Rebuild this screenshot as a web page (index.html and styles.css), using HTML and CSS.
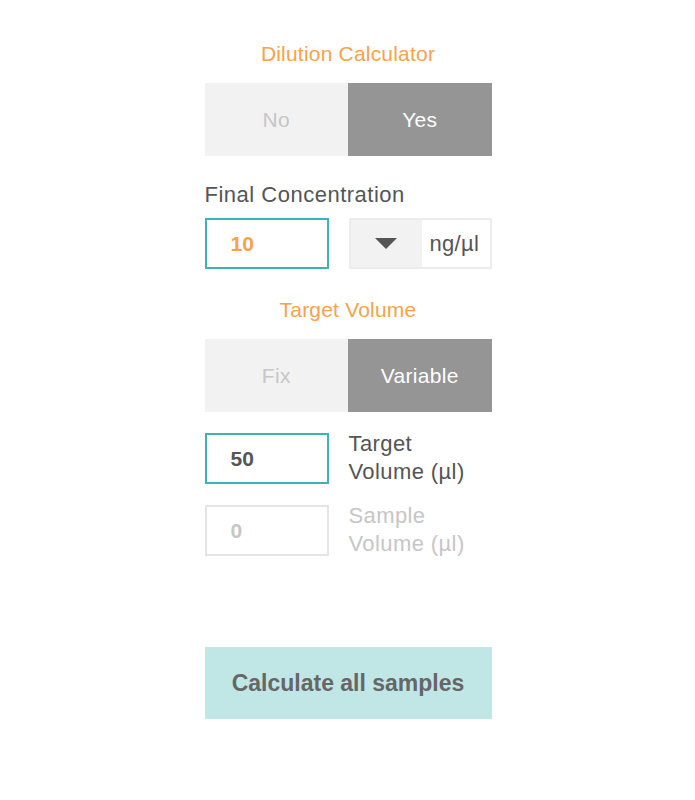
FILE: index.html
```html
<!DOCTYPE html>
<html>
<head>
<meta charset="UTF-8">
<title>Dilution Calculator</title>
<link rel="stylesheet" href="styles.css">
</head>
<body>
<div class="panel">
  <div class="section_title">Dilution Calculator</div>
  <div class="toggle">
    <div class="toggle_opt">No</div>
    <div class="toggle_opt active">Yes</div>
  </div>

  <div class="field_label">Final Concentration</div>
  <div class="row">
    <div class="num_input focus orange">10</div>
    <div class="unit_select">
      <div class="unit_arrow">
        <svg width="22" height="11" viewBox="0 0 22 11"><path d="M0 0 L22 0 L11 11 Z" fill="#555"/></svg>
      </div>
      <div class="unit_text">ng/µl</div>
    </div>
  </div>

  <div class="section_title second">Target Volume</div>
  <div class="toggle">
    <div class="toggle_opt">Fix</div>
    <div class="toggle_opt active">Variable</div>
  </div>

  <div class="row vol_row">
    <div class="num_input focus">50</div>
    <div class="row_label">Target<br>Volume (µl)</div>
  </div>
  <div class="row vol_row disabled">
    <div class="num_input">0</div>
    <div class="row_label">Sample<br>Volume (µl)</div>
  </div>

  <div class="calc_button">Calculate all samples</div>
</div>
</body>
</html>
```

FILE: styles.css
```css
html, body {
  margin: 0;
  background: #ffffff;
}

body {
  font-family: "Liberation Sans", Arial, sans-serif;
}

.panel {
  width: 287px;
  margin: 0 auto;
  padding-top: 42px;
  padding-left: 1px;
}

.section_title {
  text-align: center;
  color: #f7a24c;
  font-size: 21px;
  line-height: 24px;
  letter-spacing: 0.2px;
  margin-bottom: 17px;
}

.section_title.second {
  margin-top: 29px;
}

.toggle {
  display: flex;
  height: 73px;
}

.toggle_opt {
  flex: 1;
  display: flex;
  align-items: center;
  justify-content: center;
  background: #f2f2f2;
  color: #c6c6c6;
  font-size: 21px;
  letter-spacing: 0.3px;
}

.toggle_opt.active {
  background: #959595;
  color: #ffffff;
}

.field_label {
  margin-top: 27px;
  margin-bottom: 11px;
  color: #555555;
  font-size: 22px;
  line-height: 24px;
  letter-spacing: 0.5px;
}

.row {
  display: flex;
  gap: 20px;
  height: 51px;
}

.num_input {
  box-sizing: border-box;
  width: 124px;
  height: 51px;
  border: 2px solid #e4e4e4;
  padding-left: 24px;
  display: flex;
  align-items: center;
  font-size: 21px;
  font-weight: bold;
  color: #c6c6c6;
}

.num_input.focus {
  border-color: #3eb2b5;
  color: #555555;
}

.num_input.orange {
  color: #f7a24c;
}

.unit_select {
  box-sizing: border-box;
  flex: 1;
  display: flex;
  border: 2px solid #ececec;
}

.unit_arrow {
  width: 71px;
  background: #f2f2f2;
  display: flex;
  align-items: center;
  justify-content: center;
}

.unit_text {
  flex: 1;
  display: flex;
  align-items: center;
  padding-left: 8px;
  font-size: 22px;
  letter-spacing: 0.3px;
  color: #555555;
}

.vol_row {
  margin-top: 21px;
}

.row_label {
  font-size: 22px;
  line-height: 28px;
  letter-spacing: 0.4px;
  color: #555555;
  margin-top: -3px;
}

.disabled .row_label {
  color: #c6c6c6;
}

.calc_button {
  margin-top: 91px;
  height: 72px;
  background: #c0e6e6;
  display: flex;
  align-items: center;
  justify-content: center;
  font-size: 23px;
  font-weight: bold;
  color: #666666;
}
```
